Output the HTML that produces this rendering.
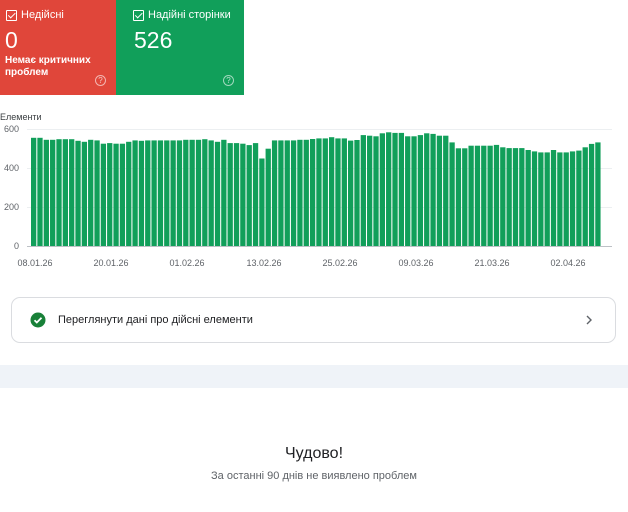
<!DOCTYPE html>
<html><head><meta charset="utf-8"><style>
body{margin:0;width:628px;height:512px;background:#fff;font-family:"Liberation Sans",sans-serif;position:relative;overflow:hidden}
.card{position:absolute;top:0;height:95px;color:#fff}
.lbl{position:absolute;left:6px;top:9px;font-size:11px;display:flex;align-items:center}
.cb{width:9px;height:9px;border:1px solid #fff;border-radius:1px;margin-right:4px;position:relative}
.cb:after{content:"";position:absolute;left:2.5px;top:0px;width:2.5px;height:5.5px;border:solid #fff;border-width:0 1.3px 1.3px 0;transform:rotate(45deg)}
.num{position:absolute;left:5px;top:27px;font-size:23px}
.q{position:absolute;width:9px;height:9px;border:1px solid rgba(255,255,255,.6);border-radius:50%;font-size:8px;text-align:center;line-height:9px;color:rgba(255,255,255,.7)}
</style></head><body>
<div class="card" style="left:0;width:116px;background:#e0463a">
 <div class="lbl"><span class="cb"></span>Недійсні</div>
 <div class="num">0</div>
 <div style="position:absolute;left:5px;top:55px;font-size:10px;line-height:12px;font-weight:bold">Немає критичних<br>проблем</div>
 <div class="q" style="left:95px;top:75px">?</div>
</div>
<div class="card" style="left:116px;width:128px;background:#119f5a">
 <div class="lbl" style="left:17px"><span class="cb"></span>Надійні сторінки</div>
 <div class="num" style="left:18px">526</div>
 <div class="q" style="left:107px;top:75px">?</div>
</div>
<div style="position:absolute;left:0;top:112px;font-size:9px;color:#3c4043">Елементи</div>
<svg style="position:absolute;left:0;top:0" width="628" height="290" font-family="Liberation Sans" font-size="9" fill="#5f6368">
<g stroke="#eceff1" stroke-width="1">
<line x1="27" x2="612" y1="129.5" y2="129.5"/><line x1="27" x2="612" y1="168.5" y2="168.5"/><line x1="27" x2="612" y1="207.5" y2="207.5"/></g>
<line x1="27" x2="612" y1="246.5" y2="246.5" stroke="#bdc1c6"/>
<g text-anchor="end"><text x="19" y="132">600</text><text x="19" y="171">400</text><text x="19" y="210">200</text><text x="19" y="249">0</text></g>
<g id="bars" fill="#119f5a"></g>
<g text-anchor="middle"><text x="35" y="266">08.01.26</text><text x="111" y="266">20.01.26</text><text x="187" y="266">01.02.26</text><text x="264" y="266">13.02.26</text><text x="340" y="266">25.02.26</text><text x="416" y="266">09.03.26</text><text x="492" y="266">21.03.26</text><text x="568" y="266">02.04.26</text></g>
</svg>
<script>
var v=[550,550,540,540,543,543,543,535,530,540,537,520,523,520,520,530,537,535,537,537,537,537,537,537,540,540,540,543,537,530,540,523,523,520,513,523,445,495,537,537,537,537,540,540,
544,547,547,553,547,547,536,539,564,561,558,573,578,575,575,558,558,564,573,570,561,561,527,497,497,510,510,510,510,514,502,498,498,498,488,481,476,476,488,476,476,481,485,502,519,527];
var g=document.getElementById('bars'),s='';
for(var i=0;i<v.length;i++){var h=v[i]*118/600;s+='<rect x="'+(31+i*6.34).toFixed(2)+'" y="'+(246-h).toFixed(1)+'" width="5.3" height="'+h.toFixed(1)+'"/>';}
g.innerHTML=s;
</script>
<div style="position:absolute;left:11px;top:297px;width:603px;height:44px;border:1px solid #dadce0;border-radius:9px">
 <svg style="position:absolute;left:18px;top:14px" width="16" height="16"><circle cx="8" cy="8" r="7.5" fill="#188038"/><path d="M4.5 8.2l2.3 2.3 4.7-4.7" stroke="#fff" stroke-width="1.8" fill="none"/></svg>
 <div style="position:absolute;left:46px;top:16px;font-size:11px;color:#202124">Переглянути дані про дійсні елементи</div>
 <svg style="position:absolute;left:573px;top:17px" width="8" height="10"><path d="M2 1l4 4-4 4" stroke="#5f6368" stroke-width="1.4" fill="none"/></svg>
</div>
<div style="position:absolute;left:0;top:365px;width:628px;height:23px;background:#eff3f8"></div>
<div style="position:absolute;left:0;top:445px;width:628px;text-align:center;font-size:16px;color:#202124">Чудово!</div>
<div style="position:absolute;left:0;top:470px;width:628px;text-align:center;font-size:11px;color:#5f6368">За останні 90 днів не виявлено проблем</div>
</body></html>
